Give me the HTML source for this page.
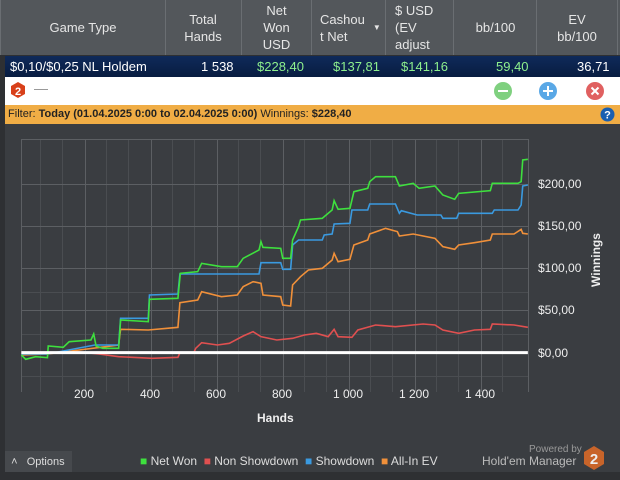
<!DOCTYPE html><html><head><style>
body{margin:0;width:620px;height:480px;overflow:hidden;background:#3a3d41;font-family:"Liberation Sans",sans-serif;position:relative}
.a{position:absolute}
.hd{top:0;left:0;width:620px;height:55px;background:#53575b;border-bottom:1px solid #2e3033}
.hd div{position:absolute;top:0;height:55px;display:flex;align-items:center;justify-content:center;text-align:center;color:#e6e6e6;font-size:13px;line-height:17px;border-right:1px solid #6a6e72}
.row{top:56px;left:5px;width:615px;height:21px;background:linear-gradient(#0f2a5a,#081c40);color:#fff;font-size:13px}
.row span{position:absolute;top:3px}
.g{color:#8ef08e}
</style></head><body>
<div class="a" style="left:0;top:0;width:5px;height:480px;background:#2e3033"></div>
<div class="a hd">
<div style="left:0;width:164px;border-left:1px solid #6a6e72;">Game Type</div>
<div style="left:165px;width:76px">Total<br>Hands</div>
<div style="left:242px;width:69px">Net<br>Won<br>USD</div>
<div style="left:312px;width:74px;justify-content:flex-start;padding-left:8px;box-sizing:border-box;text-align:left">Cashou<br>t Net<span style="font-size:8px;margin-left:8px">▼</span></div>
<div style="left:387px;width:67px;justify-content:flex-start;padding-left:8px;box-sizing:border-box;text-align:left">$ USD<br>(EV<br>adjust</div>
<div style="left:455px;width:81px">bb/100</div>
<div style="left:537px;width:80px">EV<br>bb/100</div>
</div>
<div class="a row"><span style="left:5px">$0,10/$0,25 NL Holdem</span><span style="left:196px">1 538</span><span class="g" style="left:252px">$228,40</span><span class="g" style="left:328px">$137,81</span><span class="g" style="left:396px">$141,16</span><span class="g" style="left:491px">59,40</span><span style="left:572px">36,71</span></div>
<div class="a" style="left:5px;top:77px;width:615px;height:28px;background:#fff"></div>
<svg class="a" style="left:10px;top:82px" width="16" height="17"><polygon points="8,0 15,4 15,12 8,16 1,12 1,4" fill="#d8401a"/><text x="8" y="13" font-size="11" font-weight="bold" fill="#fff" text-anchor="middle" font-family="Liberation Sans">2</text></svg>
<div class="a" style="left:34px;top:89px;width:14px;height:1px;background:#999"></div>
<svg class="a" style="left:492px;top:81px" width="120" height="20"><circle cx="11" cy="10" r="9" fill="#7fd07f"/><rect x="6" y="9" width="10" height="2" fill="#fff"/><circle cx="56" cy="10" r="9" fill="#5aa8e6"/><rect x="51" y="9" width="10" height="2" fill="#fff"/><rect x="55" y="5" width="2" height="10" fill="#fff"/><circle cx="103" cy="10" r="9" fill="#e06060"/><path d="M99.5 6.5l7 7M106.5 6.5l-7 7" stroke="#fff" stroke-width="2"/></svg>
<div class="a" style="left:5px;top:105px;width:615px;height:19px;background:#f0ad45;font-size:11px;line-height:19px;color:#222">&nbsp;Filter: <b>Today (01.04.2025 0:00 to 02.04.2025 0:00)</b> Winnings: <b>$228,40</b></div>
<svg class="a" style="left:600px;top:107px" width="15" height="15"><circle cx="7.5" cy="7.5" r="7" fill="#1a5fb0"/><text x="7.5" y="11.5" font-size="11" font-weight="bold" fill="#fff" text-anchor="middle" font-family="Liberation Sans">?</text></svg>
<svg class="a" style="left:0;top:130px" width="620" height="270">
<g stroke="#4a4d51" stroke-width="1">
<path d="M21 162.5H528M21 204.5H528M21 246.5H528M21 288.5H528M21 330.5H528M21 372.5H528M40.5 9V262M62.5 9V262M106.5 9V262M128.5 9V262M172.5 9V262M194.5 9V262M238.5 9V262M260.5 9V262M304.5 9V262M326.5 9V262M370.5 9V262M392.5 9V262M436.5 9V262M458.5 9V262M502.5 9V262"/>
</g>
<g stroke="#5c5f63" stroke-width="1">
<path d="M21.5 9V262M21 9.5H528M21 54.5H528M21 96.5H528M21 138.5H528M21 180.5H528M85.5 9V262M151.5 9V262M217.5 9V262M283.5 9V262M349.5 9V262M415.5 9V262M481.5 9V262M528.5 9V262"/>
</g>
</svg>
<svg class="a" style="left:0;top:130px" width="620" height="250" viewBox="0 0 1568 750" preserveAspectRatio="none" fill="none" stroke-width="1.6">
<polyline vector-effect="non-scaling-stroke" stroke="#e05050" points="54,668 200,666 250,672 300,680 385,685 450,682 455,668 490,668 495,655 510,638 550,645 580,640 615,618 640,605 660,620 700,630 740,625 770,615 800,610 830,620 845,598 855,620 890,622 905,600 950,585 1000,590 1070,582 1100,585 1120,600 1160,610 1200,600 1240,598 1245,582 1300,585 1335,592"/>
<polyline vector-effect="non-scaling-stroke" stroke="#f0903a" points="54,675 120,672 300,645 305,598 375,600 450,592 455,518 500,510 510,485 560,500 600,495 615,470 640,455 660,460 665,495 710,500 715,525 735,528 740,465 760,440 780,420 815,415 840,390 845,370 855,395 885,388 895,345 930,330 935,312 975,295 1005,305 1010,318 1045,312 1100,325 1120,350 1150,358 1160,345 1200,338 1240,330 1245,312 1300,312 1318,298 1322,310 1335,312"/>
<polyline vector-effect="non-scaling-stroke" stroke="#3a9ae0" points="54,672 120,672 240,645 300,645 305,565 375,565 378,495 450,492 455,432 655,432 660,398 710,398 715,418 735,418 740,345 755,330 815,330 820,315 840,312 845,282 885,280 890,240 930,240 935,222 1000,222 1010,250 1015,242 1055,255 1115,255 1120,265 1155,265 1160,250 1245,250 1250,240 1310,240 1318,225 1322,168 1335,165"/>
<polyline vector-effect="non-scaling-stroke" stroke="#3ee03e" points="54,675 65,688 90,680 120,683 122,648 160,652 175,635 230,630 237,612 243,648 260,655 300,655 305,570 375,575 378,508 450,505 456,430 500,425 510,400 560,410 600,410 615,385 655,360 660,335 665,352 710,355 715,385 735,385 740,330 755,290 760,270 815,265 820,260 840,240 845,212 855,238 885,235 895,185 930,175 935,155 950,140 1000,140 1010,168 1045,160 1060,175 1100,168 1120,195 1150,208 1160,190 1240,182 1245,160 1310,160 1318,155 1322,90 1335,88"/>
<path vector-effect="non-scaling-stroke" d="M54 668H1335" stroke="#fff" stroke-width="3"/>
</svg>
<div class="a" style="left:538px;top:177px;color:#eee;font-size:12px;line-height:14px">$200,00</div>
<div class="a" style="left:538px;top:219px;color:#eee;font-size:12px">$150,00</div>
<div class="a" style="left:538px;top:261px;color:#eee;font-size:12px">$100,00</div>
<div class="a" style="left:538px;top:303px;color:#eee;font-size:12px">$50,00</div>
<div class="a" style="left:538px;top:346px;color:#eee;font-size:12px">$0,00</div>
<div class="a" style="left:566px;top:253px;color:#eee;font-size:12px;font-weight:bold;transform:rotate(-90deg);width:60px;text-align:center">Winnings</div>
<div class="a" style="left:0;top:387px;width:620px;color:#eee;font-size:12px">
<span class="a" style="left:74px">200</span><span class="a" style="left:140px">400</span><span class="a" style="left:206px">600</span><span class="a" style="left:272px">800</span><span class="a" style="left:333px">1 000</span><span class="a" style="left:399px">1 200</span><span class="a" style="left:465px">1 400</span></div>
<div class="a" style="left:257px;top:411px;color:#eee;font-size:12px;font-weight:bold">Hands</div>
<div class="a" style="left:5px;top:451px;width:67px;height:21px;background:#46494d;color:#ddd;font-size:11px;line-height:23px">&nbsp;&nbsp;˄&nbsp;&nbsp; Options</div>
<div class="a" style="left:140px;top:454px;color:#ddd;font-size:12px;white-space:nowrap"><span style="color:#3ee03e">■</span> Net Won&nbsp; <span style="color:#e05050">■</span> Non Showdown&nbsp; <span style="color:#3a9ae0">■</span> Showdown&nbsp; <span style="color:#f0903a">■</span> All-In EV</div>
<div class="a" style="left:529px;top:444px;color:#999;font-size:10px">Powered by</div>
<div class="a" style="left:482px;top:454px;color:#bbb;font-size:12px">Hold'em Manager</div>
<svg class="a" style="left:583px;top:446px" width="22" height="24"><polygon points="11,0 21,6 21,18 11,24 1,18 1,6" fill="#c8642a"/><text x="11" y="18" font-size="15" font-weight="bold" fill="#eee" text-anchor="middle" font-family="Liberation Sans">2</text></svg>
<div class="a" style="left:0;top:472px;width:620px;height:8px;background:#2e3033"></div>
</body></html>
